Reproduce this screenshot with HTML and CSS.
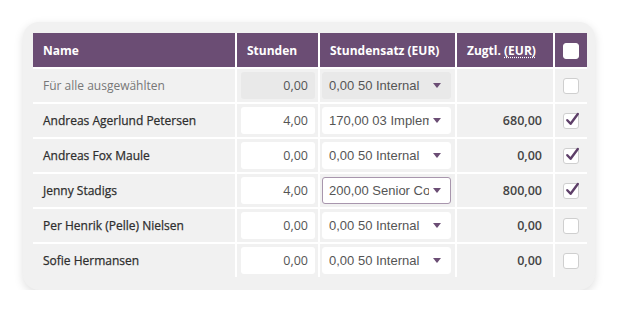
FILE: index.html
```html
<!DOCTYPE html>
<html lang="de">
<head>
  <meta charset="UTF-8" />
  <title>Stunden verteilen</title>
  <link rel="stylesheet" href="styles.css">
</head>
<body>

  <div class="card">
    <table class="hours">
      <colgroup>
        <col class="col-name">
        <col class="col-hours">
        <col class="col-rate">
        <col class="col-sum">
        <col class="col-check">
      </colgroup>
      <thead>
        <tr>
          <th>Name</th>
          <th>Stunden</th>
          <th>Stundensatz (EUR)</th>
          <th>Zugtl. <abbr title="Euro">(EUR)</abbr></th>
          <th class="check"><span class="box head"></span></th>
        </tr>
      </thead>
      <tbody>
        <!-- bulk row -->
        <tr class="all">
          <td>Für alle ausgewählten</td>
          <td><div class="num disabled">0,00</div></td>
          <td><div class="select disabled"><span>0,00 50 Internal</span><i class="caret"></i></div></td>
          <td></td>
          <td class="check"><span class="box"></span></td>
        </tr>
        <tr>
          <td>Andreas Agerlund Petersen</td>
          <td><div class="num">4,00</div></td>
          <td><div class="select"><span>170,00 03 Implementation</span><i class="caret"></i></div></td>
          <td class="sum">680,00</td>
          <td class="check"><span class="box"><svg viewBox="0 0 16 16"><path d="M3.3 8.2 L6.6 11.8 L13.8 2"/></svg></span></td>
        </tr>
        <tr>
          <td>Andreas Fox Maule</td>
          <td><div class="num">0,00</div></td>
          <td><div class="select"><span>0,00 50 Internal</span><i class="caret"></i></div></td>
          <td class="sum">0,00</td>
          <td class="check"><span class="box"><svg viewBox="0 0 16 16"><path d="M3.3 8.2 L6.6 11.8 L13.8 2"/></svg></span></td>
        </tr>
        <tr>
          <td>Jenny Stadigs</td>
          <td><div class="num">4,00</div></td>
          <td><div class="select focus"><span>200,00 Senior Consultant</span><i class="caret"></i></div></td>
          <td class="sum">800,00</td>
          <td class="check"><span class="box"><svg viewBox="0 0 16 16"><path d="M3.3 8.2 L6.6 11.8 L13.8 2"/></svg></span></td>
        </tr>
        <tr>
          <td>Per Henrik (Pelle) Nielsen</td>
          <td><div class="num">0,00</div></td>
          <td><div class="select"><span>0,00 50 Internal</span><i class="caret"></i></div></td>
          <td class="sum">0,00</td>
          <td class="check"><span class="box"></span></td>
        </tr>
        <tr>
          <td>Sofie Hermansen</td>
          <td><div class="num">0,00</div></td>
          <td><div class="select"><span>0,00 50 Internal</span><i class="caret"></i></div></td>
          <td class="sum">0,00</td>
          <td class="check"><span class="box"></span></td>
        </tr>
      </tbody>
    </table>
  </div>

</body>
</html>
```

FILE: styles.css
```css
body {
  margin: 0;
  background: #fff;
  font-family: "Open Sans", "Noto Sans", sans-serif;
}

.card {
  margin: 22px 0 0 23px;
  width: 572px;
  padding: 11px 10px 13px;
  box-sizing: border-box;
  background: #f1f1f1;
  border-radius: 16px;
  box-shadow: 0 3px 10px rgba(0, 0, 0, 0.13);
}

.hours {
  width: 554px;
  border-collapse: collapse;
  table-layout: fixed;
}

.col-name { width: 203px; }
.col-hours { width: 83px; }
.col-rate { width: 137px; }
.col-sum { width: 98px; }
.col-check { width: 33px; }

.hours th,
.hours td {
  border-left: 2px solid #fff;
  border-top: 2px solid #fff;
  padding: 0;
}

.hours th:first-child,
.hours td:first-child {
  border-left: none;
}

.hours thead th {
  border-top: none;
  height: 34px;
  background: #6b4d74;
  color: #fff;
  font-size: 12px;
  font-weight: 700;
  text-align: left;
  padding: 0 10px;
  white-space: nowrap;
}

.hours th.check {
  padding: 0;
  text-align: center;
}

abbr {
  text-decoration: underline dotted;
  text-underline-offset: 2px;
}

.hours tbody td {
  height: 33px;
  font-size: 12px;
  font-weight: 400;
  color: #2e2e2e;
  white-space: nowrap;
  -webkit-text-stroke: 0.25px #2e2e2e;
}

.hours tbody td:first-child {
  padding-left: 10px;
}

.hours tr.all td:first-child {
  color: #777;
  -webkit-text-stroke: 0;
}

.num {
  margin: 0 3px 0 4px;
  height: 27px;
  line-height: 27px;
  background: #fff;
  border-radius: 3px;
  text-align: right;
  padding-right: 7px;
  font-size: 12.5px;
  color: #555;
  -webkit-text-stroke: 0;
}

.select {
  display: flex;
  align-items: center;
  margin: 0 4px 0 2px;
  height: 27px;
  padding: 0 9px 0 6px;
  background: #fff;
  border: 1px solid #fff;
  border-radius: 3px;
  box-sizing: border-box;
  font-family: "Liberation Sans", Arial, sans-serif;
  font-size: 13px;
  color: #555;
  -webkit-text-stroke: 0;
}

.select span {
  flex: 1;
  min-width: 0;
  overflow: hidden;
}

.select.focus {
  border-color: #a896ad;
}

.disabled {
  background: #e9e9e9;
  border-color: #e9e9e9;
}

.caret {
  margin-left: 4px;
  width: 0;
  height: 0;
  border-left: 4px solid transparent;
  border-right: 4px solid transparent;
  border-top: 5px solid #6b4d74;
}

.hours td.sum {
  text-align: right;
  padding-right: 11px;
  font-size: 12.5px;
  font-weight: 600;
  color: #444;
  -webkit-text-stroke: 0;
}

.hours td.check {
  text-align: center;
}

.box {
  display: inline-block;
  vertical-align: middle;
  position: relative;
  width: 16px;
  height: 16px;
  box-sizing: border-box;
  background: #fff;
  border: 1px solid #cfcfcf;
  border-radius: 3px;
}

.box.head {
  border-color: #fff;
}

.box svg {
  position: absolute;
  left: 0;
  top: -2px;
  width: 16px;
  height: 16px;
  overflow: visible;
}

.box svg path {
  fill: none;
  stroke: #5e3f69;
  stroke-width: 2.4;
  stroke-linecap: round;
  stroke-linejoin: round;
}
```
